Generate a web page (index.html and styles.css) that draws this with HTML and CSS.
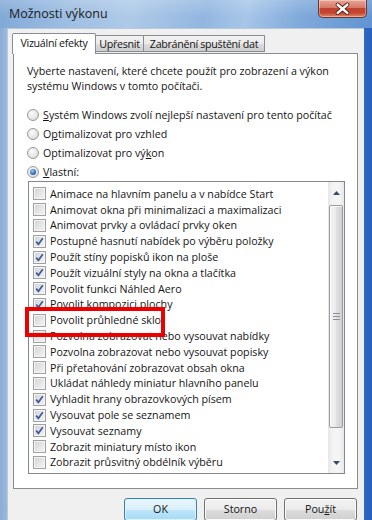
FILE: index.html
```html
<!DOCTYPE html>
<html lang="cs">
<head>
<meta charset="utf-8">
<title>Možnosti výkonu</title>
<link rel="stylesheet" href="styles.css">
</head>
<body>
<div class="window">
  <div class="titlebar">
    <span class="title">Možnosti výkonu</span>
    <div class="close">
      <svg width="49" height="18" viewBox="0 0 49 18">
        <path d="M19.5 4.5 L29.5 13 M29.5 4.5 L19.5 13" stroke="#5a1a14" stroke-width="4.4" stroke-linecap="round"/>
        <path d="M19.5 4.5 L29.5 13 M29.5 4.5 L19.5 13" stroke="#ffffff" stroke-width="2.6" stroke-linecap="round"/>
      </svg>
    </div>
  </div>
  <div class="client">
    <div class="tabs">
      <div class="tab active">Vizuální efekty</div>
      <div class="tab">Upřesnit</div>
      <div class="tab">Zabránění spuštění dat</div>
    </div>
    <div class="pane">
      <p class="intro">Vyberte nastavení, které chcete použít pro zobrazení a výkon systému Windows v tomto počítači.</p>
      <div class="radios">
        <div class="radio-row"><span class="radio"></span><span><u>S</u>ystém Windows zvolí nejlepší nastavení pro tento počítač</span></div>
        <div class="radio-row"><span class="radio"></span><span>O<u>p</u>timalizovat pro vzhled</span></div>
        <div class="radio-row"><span class="radio"></span><span>Optimalizovat pro vý<u>k</u>on</span></div>
        <div class="radio-row"><span class="radio on"></span><span><u>V</u>lastní:</span></div>
      </div>
      <div class="listbox">
        <div class="items">
          <div class="item"><span class="cb"></span>Animace na hlavním panelu a v nabídce Start</div>
          <div class="item"><span class="cb"></span>Animovat okna při minimalizaci a maximalizaci</div>
          <div class="item"><span class="cb"></span>Animovat prvky a ovládací prvky oken</div>
          <div class="item"><span class="cb on"><svg width="11" height="11" viewBox="0 0 11 11"><path d="M2.2 5.6 L4.4 8.3 L8.8 2.2" fill="none" stroke="#3d5a9c" stroke-width="1.7"/></svg></span>Postupné hasnutí nabídek po výběru položky</div>
          <div class="item"><span class="cb on"><svg width="11" height="11" viewBox="0 0 11 11"><path d="M2.2 5.6 L4.4 8.3 L8.8 2.2" fill="none" stroke="#3d5a9c" stroke-width="1.7"/></svg></span>Použít stíny popisků ikon na ploše</div>
          <div class="item"><span class="cb on"><svg width="11" height="11" viewBox="0 0 11 11"><path d="M2.2 5.6 L4.4 8.3 L8.8 2.2" fill="none" stroke="#3d5a9c" stroke-width="1.7"/></svg></span>Použít vizuální styly na okna a tlačítka</div>
          <div class="item"><span class="cb on"><svg width="11" height="11" viewBox="0 0 11 11"><path d="M2.2 5.6 L4.4 8.3 L8.8 2.2" fill="none" stroke="#3d5a9c" stroke-width="1.7"/></svg></span>Povolit funkci Náhled Aero</div>
          <div class="item"><span class="cb on"><svg width="11" height="11" viewBox="0 0 11 11"><path d="M2.2 5.6 L4.4 8.3 L8.8 2.2" fill="none" stroke="#3d5a9c" stroke-width="1.7"/></svg></span>Povolit kompozici plochy</div>
          <div class="item"><span class="cb"></span>Povolit průhledné sklo</div>
          <div class="item"><span class="cb"></span>Pozvolna zobrazovat nebo vysouvat nabídky</div>
          <div class="item"><span class="cb"></span>Pozvolna zobrazovat nebo vysouvat popisky</div>
          <div class="item"><span class="cb"></span>Při přetahování zobrazovat obsah okna</div>
          <div class="item"><span class="cb"></span>Ukládat náhledy miniatur hlavního panelu</div>
          <div class="item"><span class="cb on"><svg width="11" height="11" viewBox="0 0 11 11"><path d="M2.2 5.6 L4.4 8.3 L8.8 2.2" fill="none" stroke="#3d5a9c" stroke-width="1.7"/></svg></span>Vyhladit hrany obrazovkových písem</div>
          <div class="item"><span class="cb on"><svg width="11" height="11" viewBox="0 0 11 11"><path d="M2.2 5.6 L4.4 8.3 L8.8 2.2" fill="none" stroke="#3d5a9c" stroke-width="1.7"/></svg></span>Vysouvat pole se seznamem</div>
          <div class="item"><span class="cb on"><svg width="11" height="11" viewBox="0 0 11 11"><path d="M2.2 5.6 L4.4 8.3 L8.8 2.2" fill="none" stroke="#3d5a9c" stroke-width="1.7"/></svg></span>Vysouvat seznamy</div>
          <div class="item"><span class="cb"></span>Zobrazit miniatury místo ikon</div>
          <div class="item"><span class="cb"></span>Zobrazit průsvitný obdélník výběru</div>
        </div>
        <div class="scrollbar">
          <div class="sb-btn"><svg width="7" height="4" viewBox="0 0 7 4"><path d="M0 4 L3.5 0 L7 4 Z" fill="#3b4a63"/></svg></div>
          <div class="sb-track-top"></div>
          <div class="thumb"><svg width="7" height="7" viewBox="0 0 7 7"><path d="M0 0.5 H7 M0 3.5 H7 M0 6.5 H7" stroke="#8a8f98" stroke-width="1"/></svg></div>
          <div class="sb-track"></div>
          <div class="sb-btn"><svg width="7" height="4" viewBox="0 0 7 4"><path d="M0 0 L3.5 4 L7 0 Z" fill="#3b4a63"/></svg></div>
        </div>
        <div class="highlight"></div>
      </div>
    </div>
    <div class="buttons">
      <div class="btn default">OK</div>
      <div class="btn">Storno</div>
      <div class="btn">Pou<u>ž</u>ít</div>
    </div>
  </div>
</div>
</body>
</html>
```
FILE: styles.css
```css
html, body {
  margin: 0;
  padding: 0;
}
body {
  width: 372px;
  height: 520px;
  overflow: hidden;
  font-family: "Open Sans", "Noto Sans", sans-serif;
  font-size: 10.7px;
  letter-spacing: 0;
  color: #151515;
}
.window {
  width: 372px;
  height: 520px;
  display: flex;
  flex-direction: column;
  background: linear-gradient(to right, #8aadd6 0%, #a2bfe0 3%, #8cb0dc 40%, #6a9bd6 85%, #3770c4 96%, #2660bc 100%);
}
.titlebar {
  height: 28px;
  flex: none;
  display: flex;
  align-items: flex-start;
  padding: 0 5px 0 9px;
  background:
    linear-gradient(to bottom, rgba(255,255,255,0.18), rgba(255,255,255,0) 60%),
    linear-gradient(100deg, #80a8d6 0%, #9dbde2 18%, #afcae8 35%, #92b6e0 55%, #a7c6e8 66%, #80aadb 80%, #6194d2 100%);
}
.title {
  font-size: 12.5px;
  letter-spacing: 0;
  color: #1b1b1b;
  margin-top: 5px;
}
.close {
  margin-left: auto;
  width: 49px;
  height: 18px;
  border: 1px solid #6b3630;
  border-top: none;
  border-radius: 0 0 5px 5px;
  box-sizing: border-box;
  background: linear-gradient(to bottom, #e8a596 0%, #d67a68 45%, #c0432f 50%, #c4452f 75%, #e0886a 100%);
  box-shadow: inset 0 0 0 1px rgba(255,255,255,0.35);
  display: flex;
  align-items: center;
  justify-content: center;
}
.close svg {
  display: block;
}
.client {
  flex: 1;
  margin: 0 8px 0 7px;
  background: #f0f0f0;
  border-left: 1px solid #b9c9da;
  border-top: 1px solid #b9c9da;
  padding: 4px 6px 0 5px;
  display: flex;
  flex-direction: column;
}
.tabs {
  display: flex;
  align-items: flex-end;
  height: 20px;
  margin-left: -1px;
  position: relative;
  z-index: 1;
}
.tab {
  height: 17px;
  line-height: 16px;
  box-sizing: border-box;
  border: 1px solid #898c95;
  border-left: none;
  background: linear-gradient(to bottom, #f2f2f2 0%, #ebebeb 50%, #dddddd 51%, #cfcfcf 100%);
  margin-bottom: 1px;
  text-align: center;
  padding: 0;
  white-space: nowrap;
  letter-spacing: -0.3px;
}
.tab:nth-child(2) {
  width: 48px;
}
.tab:nth-child(3) {
  width: 121px;
}
.tab.active {
  width: 84px;
  height: 21px;
  line-height: 19px;
  border-left: 1px solid #898c95;
  border-bottom: none;
  background: #ffffff;
  margin-bottom: -1px;
  border-radius: 2px 2px 0 0;
}
.pane {
  height: 436px;
  box-sizing: border-box;
  border: 1px solid #898c95;
  background: #ffffff;
  padding: 10px 6px 0 13px;
}
.intro {
  margin: 0;
  line-height: 15px;
  width: 318px;
}
.radios {
  margin-top: 11px;
}
.radio-row {
  height: 19px;
  display: flex;
  align-items: center;
}
.radio {
  width: 12px;
  height: 12px;
  box-sizing: border-box;
  border-radius: 50%;
  border: 1px solid #9a9a9a;
  background: radial-gradient(circle at 40% 35%, #fbfbfb 0%, #e6e6e6 55%, #d0d0d0 100%);
  margin-right: 4px;
  display: flex;
  align-items: center;
  justify-content: center;
}
.radio.on::after {
  content: "";
  width: 6px;
  height: 6px;
  border-radius: 50%;
  background: radial-gradient(circle at 40% 35%, #9fd0f5 0%, #2f6fc0 55%, #1b3f86 100%);
}
.listbox {
  position: relative;
  margin-left: 1px;
  width: 317px;
  height: 293px;
  box-sizing: border-box;
  border: 1px solid #828790;
  display: flex;
  background: #ffffff;
}
.items {
  flex: 1;
  padding: 4px 0 0 4px;
}
.item {
  height: 15.8px;
  display: flex;
  align-items: center;
  white-space: nowrap;
}
.cb {
  width: 13px;
  height: 13px;
  box-sizing: border-box;
  border: 1px solid #a0a0a0;
  background: linear-gradient(135deg, #d2d2d2 0%, #e8e8e8 60%, #f4f4f4 100%);
  box-shadow: inset 0 0 0 1px #f4f4f4;
  margin-right: 4px;
  flex: none;
  display: flex;
  align-items: center;
  justify-content: center;
}
.cb svg {
  display: block;
}
.scrollbar {
  width: 16px;
  flex: none;
  display: flex;
  flex-direction: column;
  background: linear-gradient(to right, #e6e6e6, #f4f4f4 30%, #f4f4f4 70%, #e8e8e8);
}
.sb-btn {
  height: 21px;
  display: flex;
  align-items: center;
  justify-content: center;
}
.sb-track-top {
  height: 2px;
}
.thumb {
  height: 223px;
  box-sizing: border-box;
  margin: 0 1px;
  border: 1px solid #9b9b9b;
  border-radius: 2px;
  background: linear-gradient(to right, #f2f2f2 0%, #ececec 45%, #dedede 55%, #d0d0d0 100%);
  box-shadow: inset 1px 1px 0 #ffffff;
  display: flex;
  align-items: center;
  justify-content: center;
}
.sb-track {
  flex: 1;
}
.highlight {
  position: absolute;
  left: -4px;
  top: 125px;
  width: 140px;
  height: 30px;
  box-sizing: border-box;
  border: 4px solid #ec0000;
}
.buttons {
  display: flex;
  justify-content: flex-end;
  gap: 7px;
  margin-top: 9px;
  margin-right: 1px;
}
.btn {
  width: 73px;
  height: 23px;
  box-sizing: border-box;
  border: 1px solid #707070;
  border-radius: 3px;
  background: linear-gradient(to bottom, #f2f2f2 0%, #ebebeb 50%, #dddddd 51%, #cfcfcf 100%);
  box-shadow: inset 0 0 0 1px #fcfcfc;
  text-align: center;
  line-height: 20px;
}
.btn.default {
  border-color: #3c7fb1;
  background: linear-gradient(to bottom, #eaf6fd 0%, #d9f0fc 50%, #bee6fd 51%, #a7d9f5 100%);
  box-shadow: inset 0 0 0 1px #dff3fc;
}
u {
  text-decoration-thickness: 1px;
  text-underline-offset: 1px;
}
```
